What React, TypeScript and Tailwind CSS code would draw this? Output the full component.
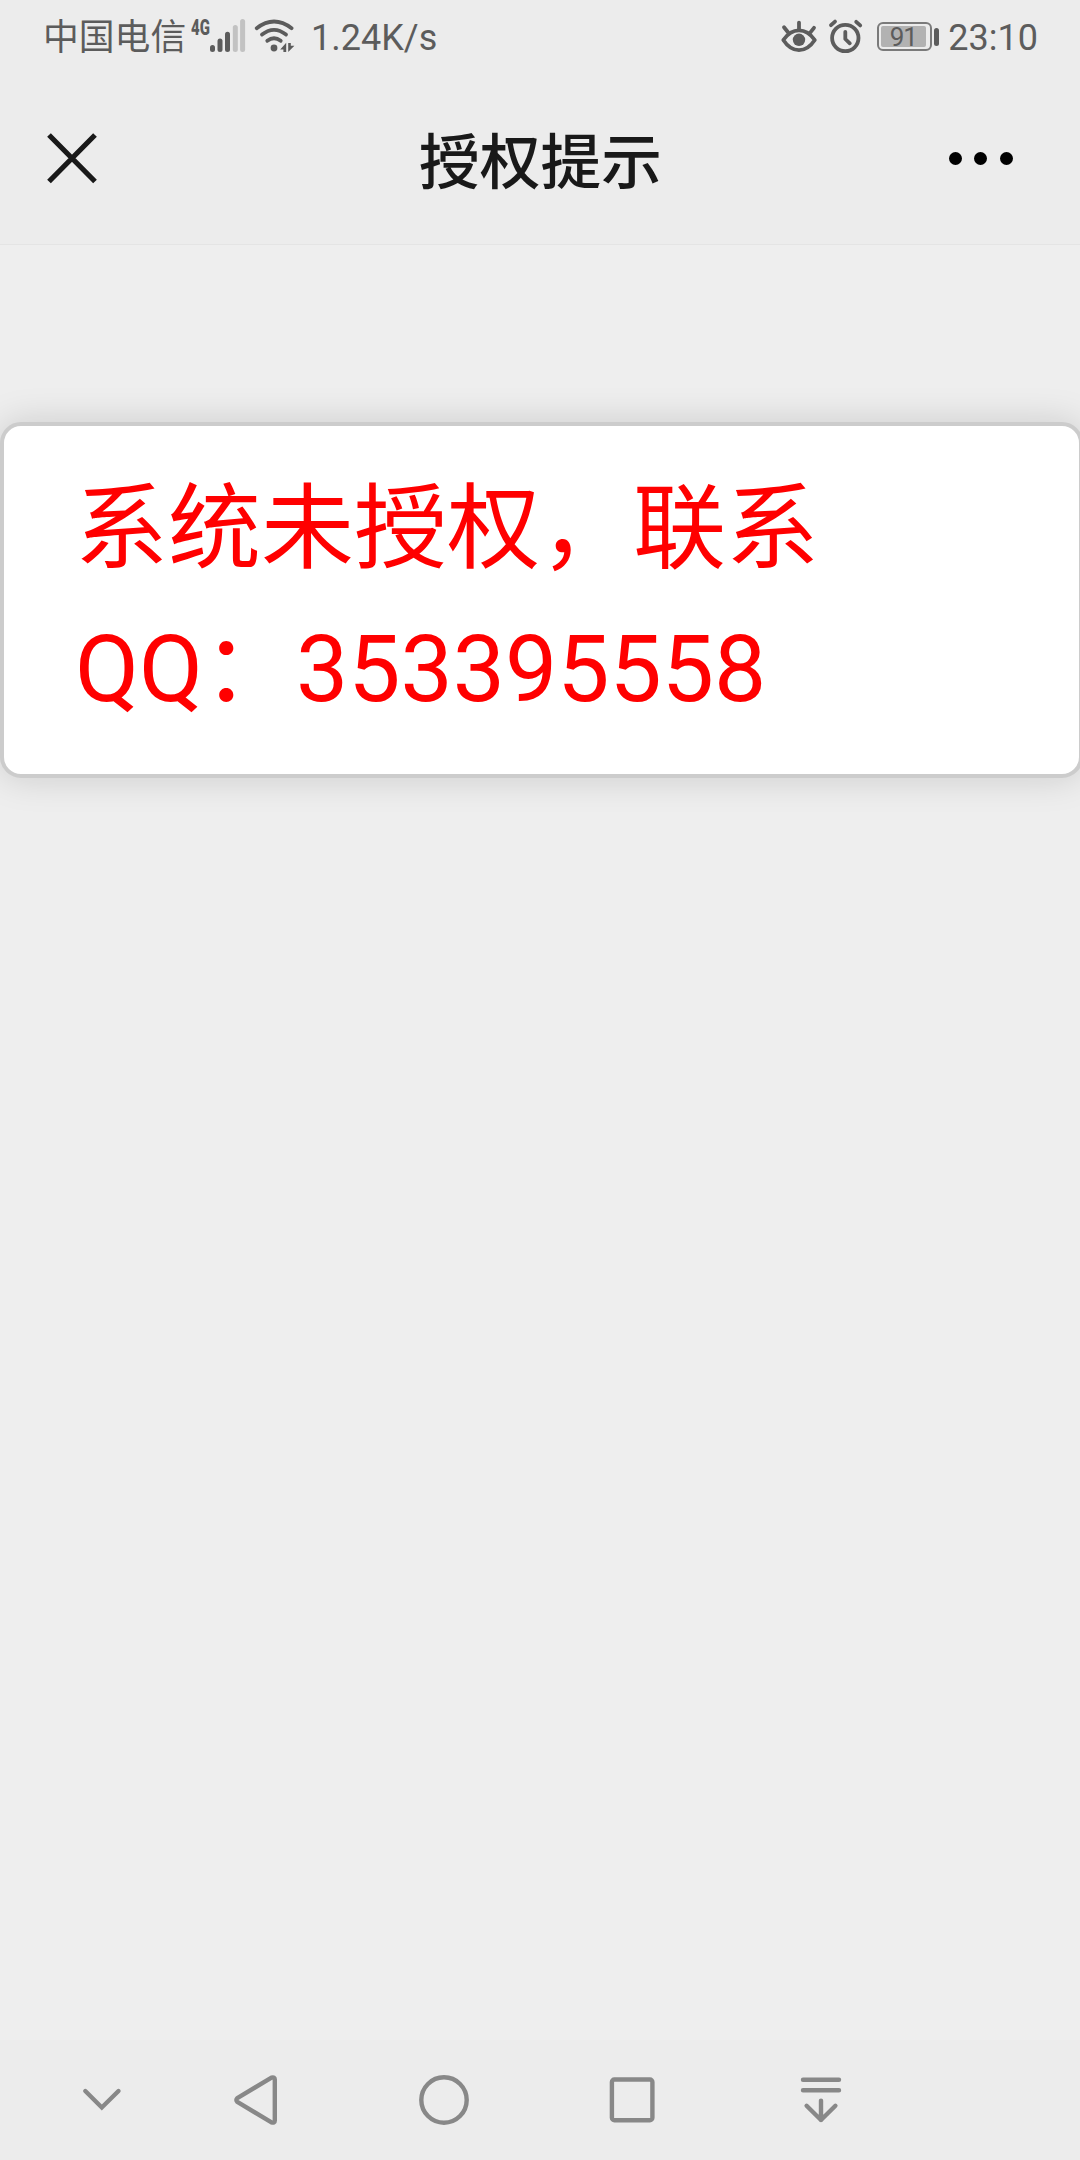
import React from 'react';

/* Barra de status */
const SignalIcon: React.FC = () => (
  <svg width="56" height="40" viewBox="190 16 56 40" fill="none" strokeWidth="5" strokeLinecap="round">
    <g stroke="#5c5c5c">
      <path d="M212.5 47.5v2" />
      <path d="M220 41v8.5" />
      <path d="M227.5 34.3v15.2" />
    </g>
    <g stroke="#c2c2c2">
      <path d="M235.3 27.5v22" />
      <path d="M242.6 21.5v28" />
    </g>
  </svg>
);

const WifiIcon: React.FC = () => (
  <svg width="42" height="40" viewBox="254 16 42 40" fill="none" stroke="#5c5c5c" strokeWidth="3.8" strokeLinecap="round">
    <path d="M256.7 28.2Q274 14.8 291.6 28.2" />
    <path d="M262 34.6Q274 25.2 286 34.6" />
    <path d="M267.3 40.8Q274 35.6 280.7 40.8" />
    <circle cx="274" cy="48" r="3.4" fill="#5c5c5c" stroke="none" />
    <path d="M286.2 42.8V52H283.4V49.6H280.2Z" fill="#5c5c5c" stroke="none" />
    <path d="M288.2 52V43H290.8V45.8H294.4Z" fill="#5c5c5c" stroke="none" />
  </svg>
);

const EyeIcon: React.FC = () => (
  <svg width="38" height="40" viewBox="780 16 38 40" fill="none" stroke="#5c5c5c" strokeWidth="3.8" strokeLinecap="round" strokeLinejoin="round">
    <path d="M783.3 40Q790 30.4 799 30.4T814.8 40Q808 50.2 799 50.2T783.3 40Z" />
    <path d="M799 22.6v7M784 27.2l3.8 4.8M814 27.8l-3.6 4.6" />
    <circle cx="799" cy="39.8" r="6.2" fill="#5c5c5c" stroke="none" />
  </svg>
);

const AlarmIcon: React.FC = () => (
  <svg width="38" height="40" viewBox="827 16 38 40" fill="none" stroke="#5c5c5c" strokeWidth="3.8" strokeLinecap="round" strokeLinejoin="round">
    <circle cx="845.3" cy="38" r="13.2" />
    <path d="M845.3 31.8v7.2l4.5 4.3" />
    <path d="M831 25.2l4-3.6M856.2 21.8l4 3.6" />
  </svg>
);

const BatteryIcon: React.FC = () => (
  <div className="flex h-[29px] items-center">
    <div className="flex h-[29px] w-[55px] items-center rounded-[6px] border-2 border-[#7a7a7a] px-[1.5px]">
      <div className="flex h-[21px] w-[45px] items-center justify-center rounded-[2px] bg-[#b2b2b2] text-[26px] leading-none tracking-[-1px]">
        91
      </div>
    </div>
    <div className="ml-[1.5px] h-[18px] w-[5px] rounded-full bg-[#5c5c5c]" />
  </div>
);

const StatusBar: React.FC = () => (
  <div className="flex h-[72px] text-[36px] leading-[72px] text-[#5c5c5c]">
    <div className="ml-[43px] w-[147px] text-[35.8px] leading-[77px] whitespace-nowrap">中国电信</div>
    <div className="relative mt-4 h-10">
      <SignalIcon />
      <span className="absolute top-[2px] left-[1px] origin-left scale-x-[0.68] text-[22px] leading-[20px] font-black">4G</span>
    </div>
    <div className="mt-4 ml-2">
      <WifiIcon />
    </div>
    <div className="ml-[15px] pt-[2px]">1.24K/s</div>
    <div className="mt-4 ml-auto flex">
      <EyeIcon />
    </div>
    <div className="mt-4 ml-[9px]">
      <AlarmIcon />
    </div>
    <div className="mt-[22px] ml-[12.5px]">
      <BatteryIcon />
    </div>
    <div className="mr-[42px] ml-[9.5px] pt-[2px]">23:10</div>
  </div>
);

/* Cabeçalho */
const Header: React.FC = () => (
  <div className="flex h-[173px] items-start justify-between border-b border-[#e4e4e4] pr-[67px] pl-[46px] text-[#191919]">
    <svg className="mt-[60px]" width="52" height="52" viewBox="46 132 52 52" stroke="#191919" strokeWidth="5.2">
      <path d="M49 135L95 181.5M95 135L49 181.5" />
    </svg>
    <h1 className="mt-[52px] ml-[34px] text-[60.7px] leading-[80px] font-medium">授权提示</h1>
    <div className="mt-[79.5px] flex gap-[12.5px]">
      <span className="size-[13px] rounded-full bg-black" />
      <span className="size-[13px] rounded-full bg-black" />
      <span className="size-[13px] rounded-full bg-black" />
    </div>
  </div>
);

/* Barra de navegação */
const NavBar: React.FC = () => (
  <div className="flex h-[120px] items-center bg-[#ececec] pl-[72px] [&_svg]:fill-none [&_svg]:stroke-[#888888] [&_svg]:stroke-[4.4]">
    <svg width="60" height="60" viewBox="72 2070 60 60" strokeLinecap="round">
      <path d="M85.3 2091L101.8 2107.5L118.5 2091" />
    </svg>
    <svg className="ml-[94px]" width="60" height="60" viewBox="226 2070 60 60" strokeLinejoin="round">
      <path d="M237.3 2098.2L271.5 2077.6Q274.8 2076.6 274.8 2079.5V2120.5Q274.8 2123.4 271.5 2122.4L237.3 2101.8Q235.4 2100 237.3 2098.2Z" />
    </svg>
    <svg className="ml-[128px]" width="60" height="60" viewBox="414 2070 60 60">
      <circle cx="444" cy="2100" r="22.7" />
    </svg>
    <svg className="ml-[128px]" width="60" height="60" viewBox="602 2070 60 60">
      <rect x="611.9" y="2079.5" width="40.5" height="40.7" rx="2.5" />
    </svg>
    <svg className="ml-[129px]" width="60" height="60" viewBox="791 2070 60 60" strokeLinecap="round" strokeLinejoin="round">
      <path d="M803 2079.7H839M803 2090.2H839" />
      <path d="M821 2100.6V2120M806.6 2105.8L821 2120L835.4 2105.8" />
    </svg>
  </div>
);

const App: React.FC = () => {
  return (
    <div className="flex h-[2160px] w-[1080px] flex-col overflow-hidden bg-[#eeeeee] font-[Roboto,'Noto_Sans_CJK_SC',sans-serif]">
      <div className="bg-[#ececec]">
        <StatusBar />
        <Header />
      </div>

      {/* Aviso */}
      <main className="flex-1 pt-[177px]">
        <div className="h-[356px] w-[1083px] rounded-[21px] border-4 border-[#cccccc] bg-white pt-[34px] pl-[71px] text-[93px] leading-[140px] text-[#ff0000] shadow-[0_0_36px_rgba(0,0,0,0.15)]">
          <p>系统未授权，联系</p>
          <p>QQ：353395558</p>
        </div>
      </main>

      <NavBar />
    </div>
  );
};

export default App;
